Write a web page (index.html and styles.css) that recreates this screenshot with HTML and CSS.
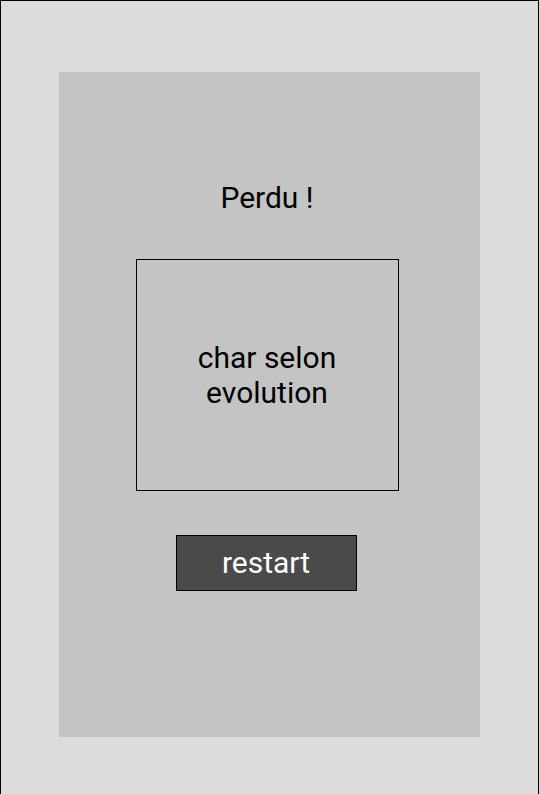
FILE: index.html
```html
<!DOCTYPE html>
<html lang="fr">
<head>
<meta charset="utf-8">
<link rel="stylesheet" href="styles.css">
</head>
<body>
<div class="frame">
  <div class="panel">
    <h1 class="title">Perdu !</h1>
    <div class="cat">char selon<br>evolution</div>
    <button class="restart">restart</button>
  </div>
</div>
</body>
</html>
```
FILE: styles.css
```css
html, body {
  margin: 0;
  padding: 0;
}
body {
  width: 539px;
  height: 794px;
  overflow: hidden;
  font-family: Roboto, "Liberation Sans", sans-serif;
}
.frame {
  box-sizing: border-box;
  width: 539px;
  height: 800px;
  border: 1px solid #000;
  background: #dcdcdc;
  padding: 71px 58px 0 58px;
}
.panel {
  box-sizing: border-box;
  width: 421px;
  height: 665px;
  padding-right: 5px;
  background: #c4c4c4;
  display: flex;
  flex-direction: column;
  align-items: center;
}
.title {
  margin: 108px 0 0 0;
  font-weight: 400;
  font-size: 30px;
  line-height: 36px;
  color: #000;
}
.cat {
  box-sizing: border-box;
  margin-top: 43px;
  width: 263px;
  height: 232px;
  border: 1px solid #000;
  display: flex;
  align-items: center;
  justify-content: center;
  text-align: center;
  font-size: 30px;
  line-height: 35px;
  color: #000;
}
.restart {
  box-sizing: border-box;
  margin: 44px 2px 0 0;
  width: 181px;
  height: 56px;
  background: #4a4a4a;
  border: 1px solid #000;
  color: #fff;
  font-family: Roboto, "Liberation Sans", sans-serif;
  font-size: 30px;
  padding: 0 0 2px 0;
}
```
